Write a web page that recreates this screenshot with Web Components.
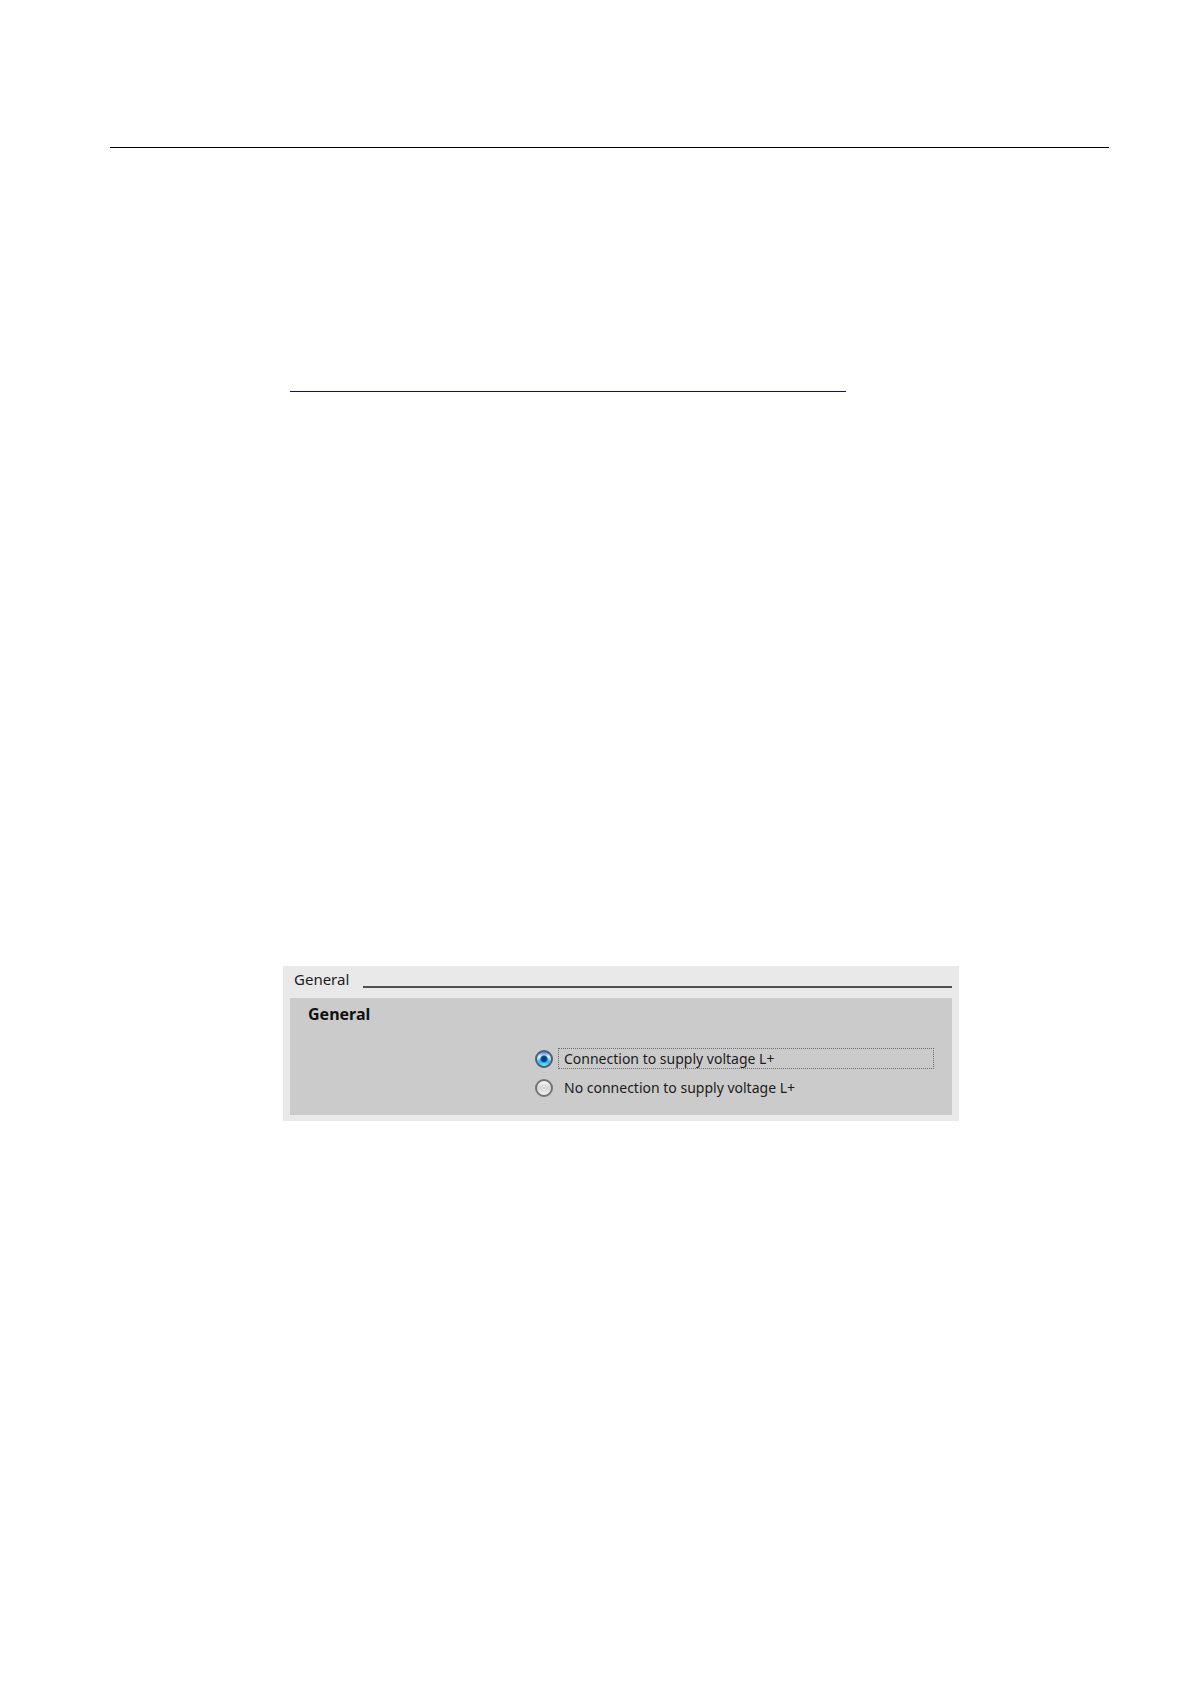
<!DOCTYPE html>
<html lang="en">
<head>
<meta charset="utf-8">
<title>General</title>
<style>
  body {
    margin: 0;
    background: #fff;
    font-family: "Noto Sans", "Open Sans", sans-serif;
    color: #1c1c1c;
  }
</style>
</head>
<body>
<manual-page>
  <reference-link href="#reference" label="Reference"></reference-link>
  <settings-panel heading="General">
    <settings-group heading="General">
      <radio-choice>
        <span>Connection to supply voltage L+</span>
        <span>No connection to supply voltage L+</span>
      </radio-choice>
    </settings-group>
  </settings-panel>
</manual-page>

<script>
class ManualPage extends HTMLElement {
  constructor() {
    super();
    this.attachShadow({ mode: "open" });
    this.shadowRoot.innerHTML = `
      <style>
        :host {
          display: block;
          box-sizing: border-box;
          min-height: 100vh;
          padding: 147px 81px 0 110px;
        }

        header {
          border-top: 1px solid #000;
        }

        main {
          display: flex;
          flex-direction: column;
          gap: 574px;
          padding: 231px 150px 0 173px;
        }
      </style>
      <header></header>
      <main><slot></slot></main>
    `;
  }
}

class ReferenceLink extends HTMLElement {
  constructor() {
    super();
    this.attachShadow({ mode: "open" });
    this.shadowRoot.innerHTML = `
      <style>
        :host {
          display: block;
          padding: 0 113px 0 7px;
        }

        a {
          display: block;
          height: 12px;
          border-bottom: 1px solid #0c0c96;
        }
      </style>
      <a href="${this.getAttribute("href")}" aria-label="${this.getAttribute("label")}"></a>
    `;
  }
}

class SettingsPanel extends HTMLElement {
  constructor() {
    super();
    this.attachShadow({ mode: "open" });
    this.shadowRoot.innerHTML = `
      <style>
        :host {
          display: block;
          padding: 0 7px 6px;
          background: #e9e9e9;
        }

        .title {
          display: flex;
          align-items: flex-start;
          gap: 14px;
          height: 32px;
          padding-left: 4px;
        }

        h1 {
          margin: 0;
          font-size: 15px;
          font-weight: 400;
          line-height: 26px;
        }

        .line {
          flex: 1;
          height: 2px;
          margin-top: 20px;
          background: #505050;
        }
      </style>
      <div class="title">
        <h1>${this.getAttribute("heading")}</h1>
        <div class="line"></div>
      </div>
      <slot></slot>
    `;
  }
}

class SettingsGroup extends HTMLElement {
  constructor() {
    super();
    this.attachShadow({ mode: "open" });
    this.shadowRoot.innerHTML = `
      <style>
        :host {
          display: block;
          padding: 3px 18px 17px;
          background: #cbcbcb;
        }

        h2 {
          margin: 0 0 21px;
          font-size: 16px;
          font-weight: 700;
          line-height: 26px;
          color: #111;
        }
      </style>
      <h2>${this.getAttribute("heading")}</h2>
      <slot></slot>
    `;
  }
}

class RadioChoice extends HTMLElement {
  constructor() {
    super();
    this.attachShadow({ mode: "open" });
    const labels = [...this.querySelectorAll("span")].map((s) => s.textContent);

    this.shadowRoot.innerHTML = `
      <style>
        :host {
          display: flex;
          flex-direction: column;
          gap: 8px;
          padding-left: 227px;
        }

        label {
          display: flex;
          align-items: center;
          gap: 5px;
          font-size: 14px;
          line-height: 19px;
        }

        input {
          appearance: none;
          box-sizing: border-box;
          flex: none;
          width: 18px;
          height: 18px;
          margin: 0;
          border: 2px solid #747474;
          border-radius: 50%;
          background: linear-gradient(#f4f4f4, #d6d6d6 50%, #f0f0f0);
        }

        input:checked {
          border-color: #4c5f78;
          background:
            radial-gradient(circle, #063e86 0 2px, #0b58a8 3px, transparent 4px),
            radial-gradient(circle at 50% 100%, #5ff0fa, #35b4ea 40%, transparent 65%),
            linear-gradient(#5a88e0, #e6f1fe 35%, #8fcbf4);
        }

        span {
          flex: 1;
          padding: 0 5px;
          border: 1px solid transparent;
        }

        input:checked + span {
          border: 1px dotted #6c6c6c;
        }
      </style>
      ${labels
        .map(
          (text, i) => `
      <label>
        <input type="radio" name="supply" ${i === 0 ? "checked" : ""}>
        <span>${text}</span>
      </label>`
        )
        .join("")}
    `;
  }
}

customElements.define("manual-page", ManualPage);
customElements.define("reference-link", ReferenceLink);
customElements.define("settings-panel", SettingsPanel);
customElements.define("settings-group", SettingsGroup);
customElements.define("radio-choice", RadioChoice);
</script>
</body>
</html>
